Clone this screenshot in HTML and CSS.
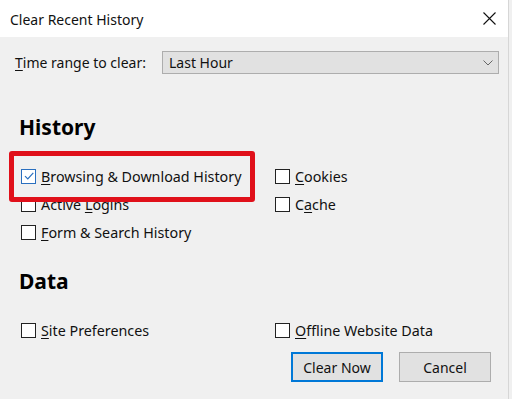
FILE: index.html
```html
<!DOCTYPE html>
<html lang="en">
  <head>
    <meta charset="UTF-8" />
    <title>Clear Recent History</title>
    <link rel="stylesheet" href="styles.css">
  </head>
  <body>
    <div class="dialog">
      <div class="titlebar">
        <span class="title">Clear Recent History</span>
        <svg class="close" width="13" height="13" viewBox="0 0 13 13">
          <path d="M0.5 0.5 L12.5 12.5 M12.5 0.5 L0.5 12.5" stroke="#111" stroke-width="1.1" fill="none" />
        </svg>
      </div>

      <div class="content">
        <div class="time-row">
          <label><u>T</u>ime range to clear:</label>
          <div class="select">
            <span>Last Hour</span>
            <svg width="10" height="6" viewBox="0 0 10 6">
              <path d="M0.5 0.5 L5 5 L9.5 0.5" stroke="#666" stroke-width="1" fill="none" />
            </svg>
          </div>
        </div>

        <h2>History</h2>
        <div class="options">
          <label class="check"><span class="box checked">
            <svg width="12" height="12" viewBox="0 0 12 12"><path d="M2 6.2 L4.8 9 L10.3 2.8" stroke="#2a6fbf" stroke-width="1.2" fill="none" /></svg>
          </span><span><u>B</u>rowsing &amp; Download History</span></label>
          <label class="check"><span class="box"></span><span><u>C</u>ookies</span></label>
          <label class="check"><span class="box"></span><span>Active <u>L</u>ogins</span></label>
          <label class="check"><span class="box"></span><span>C<u>a</u>che</span></label>
          <label class="check"><span class="box"></span><span><u>F</u>orm &amp; Search History</span></label>
        </div>

        <h2 class="data">Data</h2>
        <div class="options">
          <label class="check"><span class="box"></span><span><u>S</u>ite Preferences</span></label>
          <label class="check"><span class="box"></span><span><u>O</u>ffline Website Data</span></label>
        </div>

        <div class="buttons">
          <button class="default">Clear Now</button>
          <button>Cancel</button>
        </div>
      </div>

      <!-- annotation -->
      <div class="highlight"></div>
    </div>
  </body>
</html>
```

FILE: styles.css
```css
body {
  margin: 0;
  background: #f0f0f0;
  font-family: "Noto Sans", "Open Sans", sans-serif;
  font-size: 14px;
  color: #111;
}
.dialog {
  position: relative;
  width: 508px;
  height: 399px;
  background: #f0f0f0;
  border-right: 1px solid #d6d6d6;
  overflow: hidden;
}
.titlebar {
  height: 37px;
  background: #fff;
  display: flex;
  align-items: center;
  justify-content: space-between;
  padding: 0 12px 0 10px;
}
.title {
  font-size: 14px;
  margin-top: 1px;
}
.close {
  margin-bottom: 1px;
}
.content {
  padding: 14px 9px 0 15px;
}
.time-row {
  display: flex;
  align-items: center;
  height: 23px;
}
.time-row label {
  width: 147px;
}
.select {
  flex: 1;
  height: 21px;
  border: 1px solid #adadad;
  background: #e1e1e1;
  display: flex;
  align-items: center;
  justify-content: space-between;
  padding: 0 5px 0 6px;
}
h2 {
  font-size: 21px;
  font-weight: bold;
  line-height: 28px;
  margin: 39px 0 0 4px;
  color: #000;
}
h2.data {
  margin-top: 21px;
}
.options {
  display: grid;
  grid-template-columns: 254px 1fr;
  grid-auto-rows: 28px;
  margin: 21px 0 0 6px;
  font-size: 14.3px;
}
.check {
  display: flex;
  align-items: center;
  gap: 5px;
  white-space: nowrap;
}
.box {
  width: 13px;
  height: 13px;
  border: 1px solid #222;
  background: #fff;
  display: flex;
  align-items: center;
  justify-content: center;
}
.box.checked {
  border-color: #2a6fbf;
}
u {
  text-decoration-thickness: 1px;
  text-underline-offset: 2px;
}
.buttons {
  display: flex;
  justify-content: flex-end;
  gap: 16px;
  margin: 8px 8px 0 0;
}
button {
  width: 92px;
  height: 30px;
  font-family: inherit;
  font-size: 14px;
  color: #111;
  background: #e1e1e1;
  border: 1px solid #adadad;
  padding: 0;
}
button.default {
  border: 2px solid #0078d7;
}
.highlight {
  position: absolute;
  left: 9px;
  top: 151px;
  width: 236px;
  height: 41px;
  border: 5px solid #e0101a;
  border-radius: 3px;
}
```
